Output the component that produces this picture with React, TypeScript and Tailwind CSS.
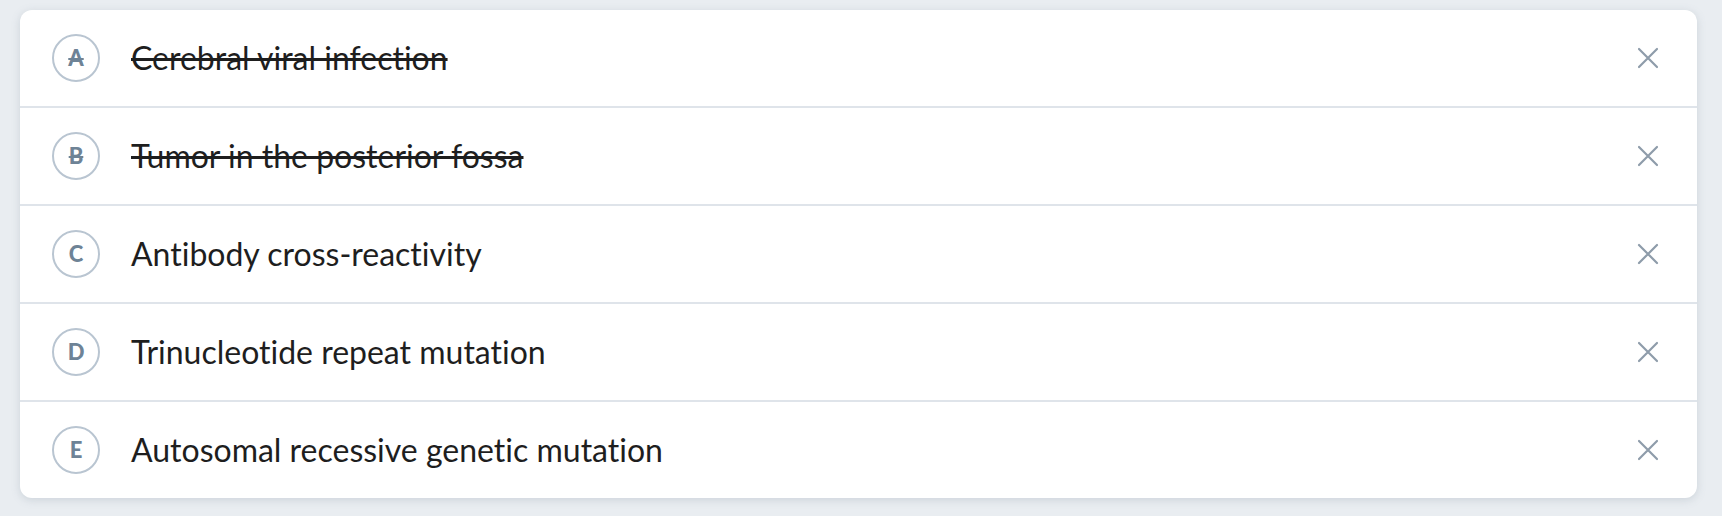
import React from "react";

const items = [
  { letter: "A", text: "Cerebral viral infection", struck: true },
  { letter: "B", text: "Tumor in the posterior fossa", struck: true },
  { letter: "C", text: "Antibody cross-reactivity", struck: false },
  { letter: "D", text: "Trinucleotide repeat mutation", struck: false },
  { letter: "E", text: "Autosomal recessive genetic mutation", struck: false },
];

function XIcon() {
  return (
    <svg width="22" height="22" viewBox="0 0 22 22" fill="none">
      <path d="M2 2L20 20M20 2L2 20" stroke="#8e9caa" strokeWidth="2.2" strokeLinecap="round" />
    </svg>
  );
}

export default function App() {
  return (
    <div
      className="w-[1722px] h-[516px] bg-[#e9edf1] pt-[10px] pl-[20px] pr-[25px]"
      style={{ fontFamily: "Lato, 'Open Sans', sans-serif", fontVariantLigatures: "none" }}
    >
      <div className="bg-white rounded-[12px] shadow-[0_2px_8px_rgba(120,135,150,0.25)] overflow-hidden">
        {items.map((it, i) => (
          <div
            key={it.letter}
            className={`flex items-center pl-[32px] pr-[36px] ${i > 0 ? "h-[98px] border-t-2 border-[#dfe4ea]" : "h-[96px]"}`}
          >
            <div className="w-[48px] h-[48px] rounded-full border-2 border-[#b9c5d1] flex items-center justify-center shrink-0">
              <span
                className={`text-[22px] font-black text-[#6e8396] leading-none ${it.struck ? "line-through decoration-[#6e8396]" : ""}`}
              >
                {it.letter}
              </span>
            </div>
            <div
              className={`ml-[31px] flex-1 text-[32px] text-[#1e1e1e] leading-none ${it.struck ? "line-through decoration-[#1e1e1e]" : ""}`}
            >
              {it.text}
            </div>
            <div className="w-[26px] h-[26px] flex items-center justify-center">
              <XIcon />
            </div>
          </div>
        ))}
      </div>
    </div>
  );
}
